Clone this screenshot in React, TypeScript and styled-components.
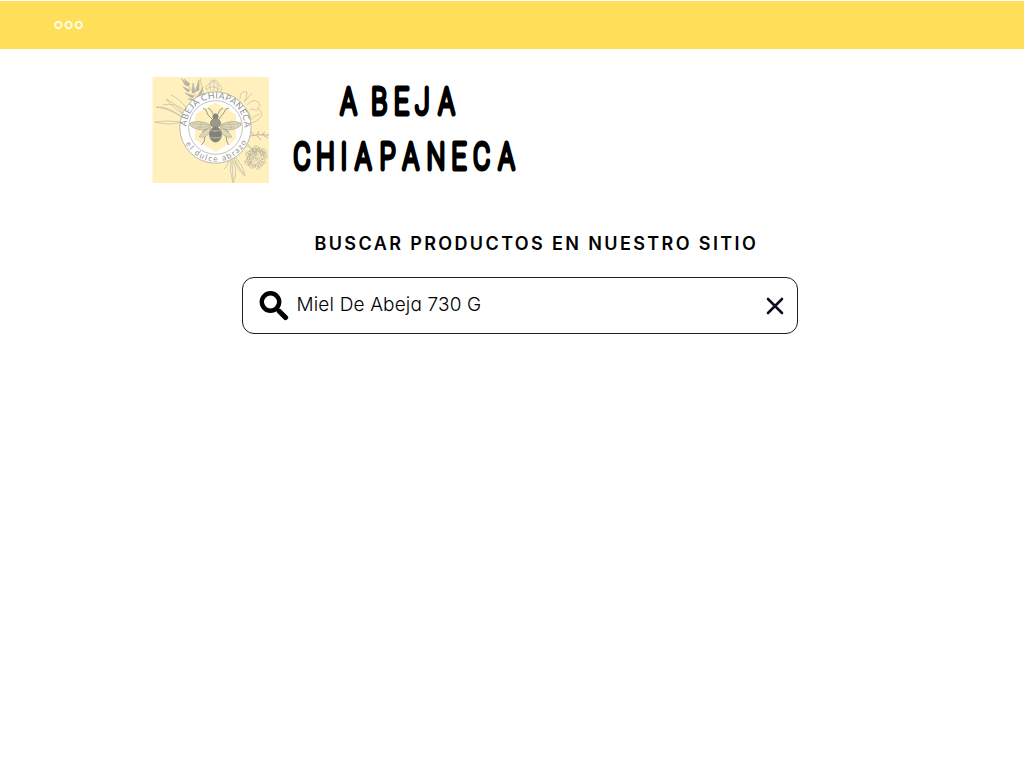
import React from "react";
import styled, { createGlobalStyle } from "styled-components";

const GlobalStyle = createGlobalStyle`
  * { box-sizing: border-box; }
  body { margin: 0; background: #ffffff; color: #000000; font-family: Inter, sans-serif; }
`;

const Page = styled.div`
  min-height: 768px;
  padding-top: 1px;
  overflow: hidden;
`;

const TopBar = styled.header`
  display: flex;
  align-items: center;
  height: 48px;
  padding-left: 54px;
  background: #ffde59;
`;

const Dots = styled.svg`
  display: block;
  width: 30px;
  height: 10px;
`;

const Brand = styled.section`
  display: flex;
  align-items: flex-start;
  padding: 28px 0 0 152px;
`;

const Emblem = styled.svg`
  display: block;
  width: 117px;
  height: 106px;
`;

const Wordmark = styled.svg`
  display: block;
  width: 250px;
  height: 106px;
  margin-left: 11px;
  overflow: visible;
  font-family: Roboto, sans-serif;
  font-weight: 100;
  font-size: 37.2px;
`;

const Search = styled.main`
  display: flex;
  flex-direction: column;
  width: 556px;
  margin: 50px 0 0 242px;
`;

const Heading = styled.h1`
  margin: 0 0 0 72.5px;
  height: 22px;
  font-size: 18px;
  line-height: 22px;
  font-weight: 600;
  letter-spacing: 2.38px;
  white-space: nowrap;
`;

const SearchBox = styled.div`
  display: flex;
  align-items: center;
  height: 57px;
  margin-top: 22px;
  padding: 0 13px 0 16px;
  border: 1.3px solid #1c1c24;
  border-radius: 12px;
`;

const Query = styled.span`
  flex: 1;
  margin: 0 0 2px 7.5px;
  font-size: 19px;
  font-weight: 270;
  letter-spacing: 0.16px;
  line-height: 26px;
  font-feature-settings: "cv11";
  white-space: nowrap;
`;

const Icon = styled.svg<{ $size: number }>`
  display: block;
  flex: none;
  width: ${(p) => p.$size}px;
  height: ${(p) => p.$size}px;
`;

const scale = 0.7;
const lines = [
  { text: "A BEJA", y: 37, xs: [68.5, 84, 99, 121.3, 142.5, 166.5] },
  { text: "CHIAPANECA", y: 92.2, xs: [22, 45.3, 64, 83.2, 107.5, 130.7, 156, 178.8, 201.8, 226.5] },
];

function BrandName() {
  return (
    <Wordmark viewBox="0 0 250 106" role="img" aria-label="A BEJA CHIAPANECA">
      <g
        transform={`scale(${scale} 1)`}
        textAnchor="middle"
        stroke="#000"
        strokeWidth="5"
        strokeLinejoin="round"
        strokeLinecap="round"
      >
        {lines.map((l) => (
          <text key={l.text} y={l.y} x={l.xs.map((x) => x / scale).join(" ")}>
            {l.text}
          </text>
        ))}
      </g>
    </Wordmark>
  );
}

const blossoms = [
  [101, 75], [107, 74], [112, 79], [98, 81], [104, 81], [110, 85], [100, 88], [106, 89], [96, 85], [104, 72], [97, 77], [111, 75],
];

function BeeEmblem() {
  return (
    <Emblem viewBox="0 0 117 106" fill="none" stroke="#b3b1a6" strokeWidth="0.6">
      <defs>
        <path id="arcTop" d="M34.5 50.5a29 29 0 0 1 58 0" />
        <path id="arcBottom" d="M29.5 50.5a34 34 0 0 0 68 0" />
      </defs>
      <rect x="0.5" width="116.5" height="106" fill="#fff0be" stroke="none" />
      <g>
        <path d="M46 25C42 14 36 8 29 1M54 22C50 16 50 8 48 1" />
        <path
          fill="#b3b1a6"
          d="M30 2l6 7-3-1zM36 9l-4-7 6 5zM38 13l-7-3 5 5zM40 16l1-10 2 9zM42 19l-9-3 7 5zM44 22l-8 0 7 2zM43 15l4-12 0 10zM45 20l6-10-2 9z"
        />
        <path d="M30 40C21 35 14 31 4 30q12-1 26 10M31 37C20 30 17 25 14 22q12 6 17 15M30 45Q15 43 3 45q14 4 27 0M36 32Q25 20 19 18M33 34Q23 25 11 28" />
        <path d="M56 14q-5-4 1-7 2-5 5-4 5 1 5 5 5 3 1 7M59 14q-4-7 3-10 6 4 3 11M62 4v10M55 12q5-5 13 1" />
        <path d="M88 22q0-9 7-7 0 7-3 10M95 28q6-7 11-3 4 3-1 7 5 1 5 6-5 8-12 8 2-7-3-13M98 32q5 0 7 2M99 43q3-5 9-6M93 24l7-8" />
        <path strokeWidth="0.9" d="M98 59q8-2 19-1M102 58l-4-4M105 58l2-4M109 58l4-3M105 59l4 4M111 58l5 3" />
        <path d="M79 82Q77 94 81 106 87 94 80 82M82 79q10 10 11 20-10-8-11-20M77 84q-2 6-5 8M83 83l9 15M80 84l1 19" />
        <path d="M90 66q9 3 14 13M93 64q7 7 12 14" />
      </g>
      <g strokeDasharray="1.2 0.8" stroke="#98968c">
        {blossoms.map(([x, y], i) => (
          <g key={i}>
            <circle cx={x} cy={y} r="3.2" />
            <path d={`M${x - 3} ${y}h6M${x} ${y - 3}v6M${x - 2} ${y - 2}l4 4`} />
          </g>
        ))}
      </g>
      <circle cx="63.5" cy="50.5" r="35.7" fill="#fff" strokeWidth="0.9" />
      <circle cx="63.5" cy="50.5" r="26.8" strokeWidth="0.8" />
      <path d="M63.5 25.5l20.5 12v25L63.5 75 43 62.5v-25z" fill="#fff0be" stroke="none" />
      <g fill="#92928f" stroke="none" fontFamily="Lato, sans-serif">
        <text fontSize="8.8">
          <textPath href="#arcTop" textLength="90" startOffset="1">ABEJA CHIAPANECA</textPath>
        </text>
        <text fontSize="8">
          <textPath href="#arcBottom" textLength="75" startOffset="17">el dulce abrazo</textPath>
        </text>
      </g>
      <g stroke="#85847d" strokeWidth="0.8">
        <path d="M60 42l-4-4-2-5-3-2M67 42l4-5 3-5 3-1M58 55l-5 4-1 6-3 3M69 55l5 4 1 6 2 3M57 50l-7 5M70 50l7 5M61 37l-2-4-3-2M66 37l2-4 3-2" />
        <path fill="#ddd6b4" stroke="#a19e91" strokeWidth="0.6" d="M59 48Q47 42 38 46q-1 3 4 5 8 4 17-1zM68 48q12-6 21-2 1 3-4 5-8 4-17-1z" />
        <path stroke="#a19e91" strokeWidth="0.4" d="M59 48q-9-1-19-1M58 49q-7 2-14 1M50 45l-3 7M68 48q9-1 19-1M69 49q7 2 14 1M77 45l3 7" />
        <path fill="#ddd6b4" stroke="#a19e91" strokeWidth="0.5" d="M59 51q-9 3-12 9 7 2 13-7M68 51q9 3 12 9-7 2-13-7" />
        <circle cx="63.5" cy="39.5" r="2.7" fill="#85847d" />
        <ellipse cx="63.5" cy="46" rx="5" ry="4.5" fill="#9a988b" />
        <ellipse cx="63.5" cy="57.5" rx="6" ry="7.6" fill="#82817a" />
        <path stroke="#b5b199" strokeWidth="1.3" d="M58 53q5 2 11 0M58 60q5 2 11 0" />
      </g>
    </Emblem>
  );
}

export default function App() {
  return (
    <Page>
      <GlobalStyle />
      <TopBar>
        <Dots viewBox="0 0 30 10" fill="none" stroke="#fffbe8" strokeWidth="1.9">
          <circle cx="4.3" cy="5" r="3.2" />
          <circle cx="14.5" cy="5" r="3.2" />
          <circle cx="24.7" cy="5" r="3.2" />
        </Dots>
      </TopBar>
      <Brand>
        <BeeEmblem />
        <BrandName />
      </Brand>
      <Search>
        <Heading>BUSCAR PRODUCTOS EN NUESTRO SITIO</Heading>
        <SearchBox>
          <Icon $size={30} viewBox="0 0 30 30" fill="none" stroke="#000">
            <circle cx="11.5" cy="11" r="8.7" strokeWidth="4.4" />
            <path d="M17.5 17.5l3 3" strokeWidth="3.5" />
            <path d="M20.5 20.5l6 6" strokeWidth="5.2" strokeLinecap="round" />
          </Icon>
          <Query>Miel De Abeja 730 G</Query>
          <Icon $size={18} viewBox="0 0 18 18" fill="none" stroke="#110d24" strokeWidth="2.6" strokeLinecap="round">
            <path d="M2 2l14 14M16 2L2 16" />
          </Icon>
        </SearchBox>
      </Search>
    </Page>
  );
}
